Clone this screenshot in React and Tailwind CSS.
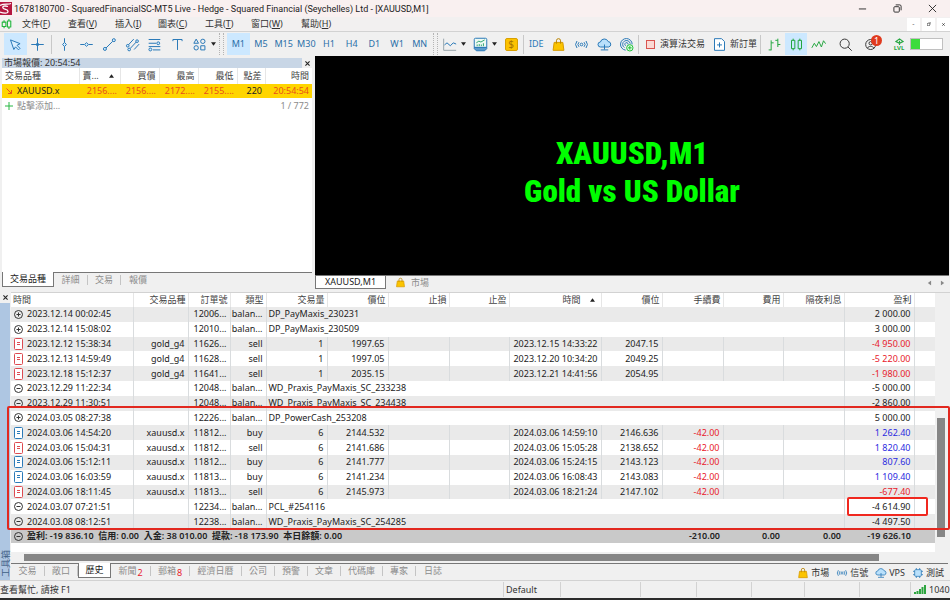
import React, { useState } from 'react'

const drawTools = ['cursor', 'cross']
const lineTools = ['vline', 'hline', 'trend', 'channel', 'fibo', 'text', 'shapes']
const timeframes = ['M1', 'M5', 'M15', 'M30', 'H1', 'H4', 'D1', 'W1', 'MN']
const menus = [
    ['文件', 'F', 'w-[46px]'],
    ['查看', 'V', 'w-[47px]'],
    ['插入', 'I', 'w-[43px]'],
    ['圖表', 'C', 'w-[47px]'],
    ['工具', 'T', 'w-[46px]'],
    ['窗口', 'W', 'w-[50px]'],
    ['幫助', 'H', 'w-[46px]'],
]

// b = balance operation, t = closed trade
const history = [
    { k: 'b', icon: 'plus', time: '2023.12.14 00:02:45', order: '12006...', note: 'DP_PayMaxis_230231', profit: '2 000.00' },
    { k: 'b', icon: 'plus', time: '2023.12.14 15:08:02', order: '12010...', note: 'DP_PayMaxis_230509', profit: '3 000.00' },
    { k: 't', type: 'sell', time: '2023.12.12 15:38:34', symbol: 'gold_g4', order: '11626...', vol: '1', open: '1997.65', closed: '2023.12.15 14:33:22', close: '2047.15', fee: '', profit: '-4 950.00', tone: 'red' },
    { k: 't', type: 'sell', time: '2023.12.13 14:59:49', symbol: 'gold_g4', order: '11628...', vol: '1', open: '1997.05', closed: '2023.12.20 10:34:20', close: '2049.25', fee: '', profit: '-5 220.00', tone: 'red' },
    { k: 't', type: 'sell', time: '2023.12.18 15:12:37', symbol: 'gold_g4', order: '11641...', vol: '1', open: '2035.15', closed: '2023.12.21 14:41:56', close: '2054.95', fee: '', profit: '-1 980.00', tone: 'red' },
    { k: 'b', icon: 'minus', time: '2023.12.29 11:22:34', order: '12048...', note: 'WD_Praxis_PayMaxis_SC_233238', profit: '-5 000.00' },
    { k: 'b', icon: 'minus', time: '2023.12.29 11:30:51', order: '12048...', note: 'WD_Praxis_PayMaxis_SC_234438', profit: '-2 860.00' },
    { k: 'b', icon: 'plus', time: '2024.03.05 08:27:38', order: '12226...', note: 'DP_PowerCash_253208', profit: '5 000.00' },
    { k: 't', type: 'buy', time: '2024.03.06 14:54:20', symbol: 'xauusd.x', order: '11812...', vol: '6', open: '2144.532', closed: '2024.03.06 14:59:10', close: '2146.636', fee: '-42.00', profit: '1 262.40', tone: 'blue' },
    { k: 't', type: 'sell', time: '2024.03.06 15:04:31', symbol: 'xauusd.x', order: '11812...', vol: '6', open: '2141.686', closed: '2024.03.06 15:05:28', close: '2138.652', fee: '-42.00', profit: '1 820.40', tone: 'blue' },
    { k: 't', type: 'buy', time: '2024.03.06 15:12:11', symbol: 'xauusd.x', order: '11812...', vol: '6', open: '2141.777', closed: '2024.03.06 15:24:15', close: '2143.123', fee: '-42.00', profit: '807.60', tone: 'blue' },
    { k: 't', type: 'buy', time: '2024.03.06 16:03:59', symbol: 'xauusd.x', order: '11813...', vol: '6', open: '2141.234', closed: '2024.03.06 16:08:43', close: '2143.083', fee: '-42.00', profit: '1 109.40', tone: 'blue' },
    { k: 't', type: 'sell', time: '2024.03.06 18:11:45', symbol: 'xauusd.x', order: '11813...', vol: '6', open: '2145.973', closed: '2024.03.06 18:21:24', close: '2147.102', fee: '-42.00', profit: '-677.40', tone: 'red' },
    { k: 'b', icon: 'minus', time: '2024.03.07 07:21:51', order: '12234...', note: 'PCL_#254116', profit: '-4 614.90' },
    { k: 'b', icon: 'minus', time: '2024.03.08 08:12:51', order: '12238...', note: 'WD_Praxis_PayMaxis_SC_254285', profit: '-4 497.50' },
]

const tones = { red: 'text-[#e8202c]', blue: 'text-[#2a2ae0]' }

const glyphs = {
    cursor: <path d="M3 3.5 7 15l2-3.2 3.6 3.6 1.8-1.8-3.6-3.6L14.5 8Z" fill="#d9efff" />,
    cross: <path d="M9 1.500v15M1.500 9h15M7.500 9a1.500 1.500 0 1 0 3 0 1.500 1.500 0 0 0-3 0" />,
    vline: <><path d="M9 1.500v5M9 11.500v5" /><path d="M9 6.500 11.3 9 9 11.500 6.7 9Z" fill="#d9efff" /></>,
    hline: <><path d="M1.500 9h5M11.500 9h5" /><path d="M9 6.800 11.300 9 9 11.200 6.700 9Z" fill="#d9efff" /></>,
    trend: <><path d="m4.500 13.500 8.500-8.500" /><circle cx="3.500" cy="14.300" r="1.800" fill="#d9efff" /><circle cx="14.200" cy="3.800" r="1.800" fill="#d9efff" /></>,
    channel: <><path d="m4 9.500 6.500-7M6 14l7.500-8M11 15l6-6.500" /><circle cx="3.300" cy="10.500" r="1.600" fill="#d9efff" /><circle cx="5" cy="15" r="1.600" fill="#d9efff" /><circle cx="14.500" cy="5" r="1.600" fill="#d9efff" /></>,
    fibo: <><path d="M2 3h14M2 7.500h9M2 11.500h14M7 15.500h9" /><circle cx="13.500" cy="7.500" r="1.700" fill="#d9efff" /><circle cx="4" cy="15" r="1.700" fill="#d9efff" /></>,
    text: <path d="M3.500 5V3h11v2M9 3v12.500" />,
    shapes: <><path d="M5 2.500 7.800 7.500H2.200Z" /><circle cx="13" cy="5.200" r="2.600" /><circle cx="5" cy="13" r="2.600" /><rect x="10.500" y="10.500" width="5" height="5" /></>,
    signal: <><circle cx="9" cy="9" r="1.600" /><path d="M6 6.200a4 4 0 0 0 0 5.600M12 6.200a4 4 0 0 1 0 5.600M3.600 4.800a6.600 6.600 0 0 0 0 8.400M14.400 4.800a6.600 6.600 0 0 1 0 8.400" /></>,
    cloud: <><path d="M4.300 12a3 3 0 0 1-.2-6 4.900 4.900 0 0 1 9.300-.5 3.300 3.300 0 0 1 .6 6.500Z" fill="#b9e0fb" /><path d="M9 9v6M4.500 15.500h9" /></>,
    vps: <><path d="M8 15.800a7 7 0 1 1 7.800-7M6.500 12.700A4.600 4.600 0 1 1 13.500 8M8 10.500A2 2 0 1 1 11 9" /><circle cx="13" cy="13" r="3.800" fill="#e6ffe6" stroke="#1fbf3a" /><path d="M13 10.800v4.400M10.800 13h4.400" stroke="#1fbf3a" /></>,
    chip: <><rect x="4" y="4" width="10" height="10" rx="1.500" fill="#b9e0fb" /><path d="M6.500 1.500V4M11.500 1.500V4M6.500 14v2.500M11.500 14v2.500M1.500 6.500H4M1.500 11.500H4M14 6.500h2.500M14 11.500h2.500" /></>,
    bag: <><path d="M3.800 6.500h10.400l1.300 9.500h-13Z" fill="#fbc400" stroke="#d79b00" /><path d="M6.500 8V4.500a2.500 2.500 0 0 1 5 0V8" stroke="#b98200" /></>,
    line: <><path d="M2 2v14H17" stroke="#9aa6ad" /><path d="m3 9.500 3-2.500 4 3.500 3.500-3.500 3.500 1.500" /></>,
    monitor: <><path d="M1.500 12.500V3A1.500 1.500 0 0 1 3 1.500h12A1.500 1.500 0 0 1 16.500 3v9.500Z" fill="#eefaf4" /><path d="M1.500 12.500h15v1.500L14 16.500H4L1.500 14Z" fill="#5b9ccc" /><path d="m4 7 3-2 2.500 1L14 3.500M5 11V9M7.500 11V8.500M10 11V9M12.500 11V7.500" stroke="#33a873" /></>,
    neworder: <><path d="M3 2h8.500L15 5.500V16H3Z" fill="#fff" /><path d="M9 6.500v6M6 9.500h6" /></>,
    bars: <path d="M5 4v12M2 15.500h3M5 7h3M13 2v10M10 4h3M13 9h3" stroke="#27a742" />,
    candles: <g stroke="#22a63d"><path d="M5 2v2M5 14v2M13 2v2M13 14v2" /><rect x="3" y="4" width="4" height="10" /><rect x="11" y="4" width="4" height="10" /></g>,
    zigzag: <path d="m1 13 3-5.500 2.500 4L9.500 5.500l3 6.500L15 4.500 17.500 8" stroke="#27a742" />,
    search: <g stroke="#3a3a3a"><circle cx="8" cy="8" r="5.500" /><path d="m12 12 4.500 4.500" /></g>,
    user: <g stroke="#3a3a3a"><circle cx="8" cy="9" r="6" /><circle cx="8" cy="7.500" r="2" /><path d="M4 13.500c1.500-3 6.500-3 8 0" /></g>,
    mt: <g stroke="#22b63d" strokeWidth="1.800"><path d="M5 3v3M5 13v3M13 1v3M13 14v3" /><rect x="2" y="6" width="6" height="7" /><rect x="10.500" y="4" width="5.500" height="10" /></g>,
}

function Glyph({ name, className = 'size-[15px]' }) {
    return (
        <svg viewBox="0 0 18 18" className={`shrink-0 ${className}`} fill="none" stroke="#2b7ab8" strokeWidth="1.2" strokeLinejoin="round" aria-hidden="true">
            {glyphs[name]}
        </svg>
    )
}

function Sep() {
    return <div className="w-px h-[19px] bg-[#c8c8c8] shrink-0" />
}

function Grip() {
    return <div className="w-[5px] h-[22px] border-x border-dotted border-[#b4b4b4] shrink-0" />
}

function ToolButton({ name, active, className = 'flex-1' }) {
    return (
        <button aria-label={name} className={`h-[22px] flex items-center justify-center ${active ? 'bg-[#cce8ff]' : ''} ${className}`}>
            <Glyph name={name} />
        </button>
    )
}

function Caret({ className }) {
    return (
        <svg viewBox="0 0 6 4" className={`w-[5px] h-1 shrink-0 ${className}`} aria-hidden="true">
            <path d="M0 0h6L3 4Z" fill="#222" />
        </svg>
    )
}

function Cross({ className = 'size-[5px]' }) {
    return (
        <svg viewBox="0 0 6 6" className={className} fill="none" stroke="#222" strokeWidth="1.300" aria-hidden="true">
            <path d="m.500.500 5 5M5.500.500l-5 5" />
        </svg>
    )
}

function TitleBar() {
    return (
        <header className="h-[17px] flex items-center bg-[#f9f0f0] shrink-0">
            <svg viewBox="0 0 12 13" className="w-3 h-[13px] shrink-0" aria-hidden="true">
                <rect width="12" height="13" fill="#b5173f" />
                <path d="M0 3.500C4 1 8 3 11 1.500M8 4.500C5 3.500 2 4 3 6s5 1 5 3.500S3 11 0 10" fill="none" stroke="#fff" strokeWidth="1.300" />
            </svg>
            <h1 className="ml-[2px] leading-4 flex-1 text-[#222] font-['Roboto','Noto_Sans',sans-serif]">1678180700 - SquaredFinancialSC-MT5 Live - Hedge - Squared Financial (Seychelles) Ltd - [XAUUSD,M1]</h1>
            <div className="flex">
                <button aria-label="Minimize" className="w-[35px] h-4 flex items-center justify-center">
                    <svg viewBox="0 0 10 10" className="size-[9px]" stroke="#222" fill="none"><path d="M1 5.500h8" /></svg>
                </button>
                <button aria-label="Restore" className="w-[35px] h-4 flex items-center justify-center">
                    <svg viewBox="0 0 10 10" className="size-[9px]" stroke="#222" fill="none"><rect x="1" y="3" width="6" height="6" rx="1" /><path d="M3 1h4.500A1.500 1.500 0 0 1 9 2.500V7" /></svg>
                </button>
                <button aria-label="Close" className="w-[35px] h-4 flex items-center justify-center">
                    <svg viewBox="0 0 10 10" className="size-[9px]" stroke="#222" fill="none"><path d="m1 1 8 8M9 1 1 9" /></svg>
                </button>
            </div>
        </header>
    )
}

function MenuBar() {
    return (
        <nav className="h-[14px] flex items-center bg-[#f2f0f0] shrink-0">
            <Glyph name="mt" className="w-[11px] h-3 ml-px mr-[10px]" />
            {menus.map(([label, key, width]) => (
                <button key={key} className={`${width} text-left leading-[14px]`}>{label}(<u>{key}</u>)</button>
            ))}
            <div className="ml-auto flex gap-[2px] text-[7px] text-[#666]">
                <button aria-label="Minimize chart" className="w-[13px] h-[13px] bg-white leading-3">-</button>
                <button aria-label="Restore chart" className="w-[13px] h-[13px] bg-white flex items-center justify-center">
                    <svg viewBox="0 0 6 6" className="size-1" stroke="#777" fill="none"><rect x="0.500" y="2" width="3.500" height="3.500" /><path d="M2 .500h3.500V4" /></svg>
                </button>
                <button aria-label="Close chart" className="w-[13px] h-[13px] bg-white flex items-center justify-center">
                    <Cross className="size-[3px]" />
                </button>
            </div>
        </nav>
    )
}

function Toolbar() {
    const [frame, setFrame] = useState('M1')
    return (
        <div className="h-[25px] flex items-center border-t border-[#d2d2d2] shrink-0 pl-1 whitespace-nowrap">
            <div className="flex w-[45px] shrink-0">
                {drawTools.map(t => <ToolButton key={t} name={t} active={t === 'cursor'} />)}
            </div>
            <div className="flex w-1 shrink-0 justify-center"><Sep /></div>
            <div className="flex w-[158px] shrink-0">
                {lineTools.map(t => <ToolButton key={t} name={t} />)}
            </div>
            <Caret className="mr-[3px]" />
            <Grip />
            <div className="flex w-[204px] shrink-0 ml-[3px]">
                {timeframes.map(t => (
                    <button
                        key={t}
                        onClick={() => setFrame(t)}
                        className={`flex-1 basis-0 min-w-0 h-[22px] text-[#2a6fa8] text-center ${frame === t ? 'bg-[#cce8ff]' : ''}`}
                    >
                        {t}
                    </button>
                ))}
            </div>
            <div className="ml-[2px]"><Grip /></div>
            <ToolButton name="line" className="w-[23px]" />
            <Caret className="mr-[3px]" />
            <ToolButton name="monitor" className="w-[23px]" />
            <Caret className="mr-[4px]" />
            <button aria-label="dollar" className="w-[20px] h-[22px] flex items-center justify-center">
                <span className="w-[13px] h-[13px] rounded-xs bg-[#fcc200] border border-[#d9a000] text-[#a87400] text-[10px] leading-[11px] text-center">$</span>
            </button>
            <div className="flex w-[4px] justify-center"><Sep /></div>
            <div className="flex w-[113px] shrink-0 items-center">
                <button className="flex-1 basis-0 text-[9px] text-[#2b7ab8]">IDE</button>
                {['bag', 'signal', 'cloud', 'vps'].map(t => <ToolButton key={t} name={t} />)}
            </div>
            <Sep />
            <button className="flex items-center gap-[5px] ml-[7px] h-[22px] shrink-0">
                <span className="size-[9px] border border-[#d9544f] bg-[#fbd9d4]" />
                演算法交易
            </button>
            <button className="flex items-center gap-[3px] ml-[7px] h-[22px] shrink-0">
                <Glyph name="neworder" />
                新訂單
            </button>
            <div className="flex w-[6px] justify-center"><Sep /></div>
            <div className="flex w-[66px] shrink-0">
                <ToolButton name="bars" />
                <ToolButton name="candles" active />
                <ToolButton name="zigzag" />
            </div>
            <ToolButton name="search" className="w-[24px] ml-[4px]" />
            <div className="relative">
                <ToolButton name="user" className="w-[28px]" />
                <span className="absolute left-[14px] top-[2px] size-[11px] rounded-full bg-[#e03a1e] text-white text-[9px] leading-[11px] text-center">1</span>
            </div>
            <div className="ml-[4px] flex flex-col items-center w-[20px]">
                <svg viewBox="0 0 10 8" className="w-[9px] h-[7px]" fill="none" stroke="#27a742" strokeWidth="1.300"><path d="M1 4 5 1l4 3-4 2ZM5 3v5" /></svg>
                <span className="text-[6px] leading-[6px] font-bold text-[#27a742]">LVL</span>
            </div>
            <div className="ml-px mr-auto w-[33px] h-[12px] border border-[#c0c0c0] bg-white">
                <div className="w-[9px] h-full bg-[#3ddc3d]" />
            </div>
        </div>
    )
}

function TabStrip({ tabs, active, onPick }) {
    return (
        <div role="tablist" className="flex text-[#8c8c8c]">
            {tabs.map(([label, width, count], i) => (
                <button
                    key={label}
                    role="tab"
                    aria-selected={active === label}
                    onClick={() => onPick(label)}
                    className={active === label
                        ? `${width} h-[15px] -mt-px bg-white text-[#222] border border-t-0 border-[#777] leading-3`
                        : `${width} h-[14px] flex items-center`}
                >
                    {active === label ? label : (
                        <span className={`w-full h-[10px] flex items-center justify-center leading-[10px] border-[#c4c4c4] ${i < tabs.length - 1 ? 'border-r' : ''}`}>
                            {label}
                            {count && <span className="text-[#e8202c] ml-px pt-[3px]">{count}</span>}
                        </span>
                    )}
                </button>
            ))}
        </div>
    )
}

function MarketWatch() {
    const [tab, setTab] = useState('交易品種')
    return (
        <section className="w-[315px] shrink-0 flex flex-col pl-[2px] pr-[3px] pt-[2px]">
            <div className="h-[10px] flex items-center justify-between bg-[#c8d6e6] pl-[2px] shrink-0">
                <h2 className="leading-[10px]">市場報價: 20:54:54</h2>
                <button aria-label="Close market watch" className="w-[10px] h-[10px] bg-[#f0f0f0] flex items-center justify-center"><Cross /></button>
            </div>
            <div className="flex-1 bg-white">
                <table className="w-full table-fixed border-collapse whitespace-nowrap text-right">
                    <colgroup>
                        <col className="w-[77px]" />
                        <col className="w-[41px]" />
                        <col className="w-[39px]" />
                        <col className="w-[39px]" />
                        <col className="w-[39px]" />
                        <col className="w-[28px]" />
                        <col />
                    </colgroup>
                    <thead>
                        <tr className="h-[16px] text-[#444]">
                            <th className="font-normal text-left pl-[3px] border-r border-[#e6e6e6]">交易品種</th>
                            <th className="font-normal pl-[3px] border-r border-[#e6e6e6]">
                                <div className="flex items-center justify-between pr-[6px]">賣...<Caret className="rotate-180" /></div>
                            </th>
                            <th className="font-normal pr-[3px] border-r border-[#e6e6e6]">買價</th>
                            <th className="font-normal pr-[3px] border-r border-[#e6e6e6]">最高</th>
                            <th className="font-normal pr-[3px] border-r border-[#e6e6e6]">最低</th>
                            <th className="font-normal pr-[3px] border-r border-[#e6e6e6]">點差</th>
                            <th className="font-normal pr-[3px]">時間</th>
                        </tr>
                    </thead>
                    <tbody>
                        <tr className="h-[14px] bg-[#ffd500] text-[#e8501c]">
                            <td className="text-left text-[#222]">
                                <div className="flex items-center gap-[5px] pl-[4px]">
                                    <svg viewBox="0 0 6 6" className="size-[6px]" fill="none" stroke="#e8501c"><path d="m.500.500 5 5M5.500 2v3.500H2" /></svg>
                                    XAUUSD.x
                                </div>
                            </td>
                            <td className="pr-[3px]">2156....</td>
                            <td className="pr-[3px]">2156....</td>
                            <td className="pr-[3px]">2172....</td>
                            <td className="pr-[3px]">2155....</td>
                            <td className="pr-[3px] text-[#222]">220</td>
                            <td className="pr-[3px]">20:54:54</td>
                        </tr>
                        <tr className="h-[15px] text-[#8c8c8c]">
                            <td className="text-left" colSpan={6}>
                                <button className="flex items-center gap-[4px] pl-[3px]">
                                    <svg viewBox="0 0 8 8" className="size-2" stroke="#27b742"><path d="M4 0v8M0 4h8" /></svg>
                                    點擊添加...
                                </button>
                            </td>
                            <td className="pr-[3px]">1 / 772</td>
                        </tr>
                    </tbody>
                </table>
            </div>
            <div className="h-[17px] border-t border-[#777] shrink-0">
                <TabStrip
                    tabs={[['交易品種', 'w-[52px]'], ['詳細', 'w-[34px]'], ['交易', 'w-[33px]'], ['報價', 'w-[34px]']]}
                    active={tab}
                    onPick={setTab}
                />
            </div>
        </section>
    )
}

function Chart() {
    return (
        <section className="flex-1 min-w-0 flex flex-col pr-px">
            <div className="flex-1 bg-black flex flex-col items-center justify-center pt-[14px] text-[#00ff00] font-black text-[31px] leading-[38px] text-center font-[Impact,'Roboto_Condensed','DejaVu_Sans_Condensed',sans-serif]">
                <p>XAUUSD,M1</p>
                <p>Gold vs US Dollar</p>
            </div>
            <div className="h-[14px] flex items-center border-t border-[#777] shrink-0">
                <button className="w-[71px] h-[13px] bg-white border border-t-0 border-[#777] leading-3 text-[#222]">XAUUSD,M1</button>
                <button className="flex items-center gap-[5px] ml-[9px] text-[#8c8c8c] leading-3"><Glyph name="bag" className="size-[11px]" />市場</button>
                <div className="ml-auto flex gap-[8px] pr-[4px]">
                    <button aria-label="Scroll left"><Caret className="rotate-90 opacity-50" /></button>
                    <button aria-label="Scroll right"><Caret className="-rotate-90 opacity-50" /></button>
                </div>
            </div>
        </section>
    )
}

function RowIcon({ row }) {
    if (row.k === 't') {
        const c = row.type === 'sell' ? '#dd4a50' : '#2b7ab8'
        return (
            <svg viewBox="0 0 9 12" className="w-[9px] h-3 shrink-0" fill="#fff" stroke={c}>
                <rect x="0.500" y="0.500" width="8" height="11" rx="1" />
                <path d="M3 4.500h3M3 6.500h3" />
            </svg>
        )
    }
    return (
        <svg viewBox="0 0 9 9" className="size-[9px] shrink-0" fill="none" stroke="#333">
            <circle cx="4.500" cy="4.500" r="4" />
            <path d={row.icon === 'plus' ? 'M2.500 4.500h4M4.500 2.500v4' : 'M2.500 4.500h4'} />
        </svg>
    )
}

const cell = 'pr-[3px] border-r border-[#d9dcde]'

function HistoryTable() {
    return (
        <table className="w-full h-[250px] table-fixed border-collapse whitespace-nowrap text-right leading-3 bg-white">
            <colgroup>
                <col className="w-[122px]" />
                <col className="w-[55px]" />
                <col className="w-[42px]" />
                <col className="w-[36px]" />
                <col className="w-[61px]" />
                <col className="w-[61px]" />
                <col className="w-[61px]" />
                <col className="w-[60px]" />
                <col className="w-[92px]" />
                <col className="w-[61px]" />
                <col className="w-[61px]" />
                <col className="w-[60px]" />
                <col className="w-[61px]" />
                <col className="w-[70px]" />
                <col />
            </colgroup>
            <thead>
                <tr className="h-[14px] text-[#444]">
                    <th className="font-normal text-left pl-[2px] border-r border-[#e6e6e6]">時間</th>
                    {['交易品種', '訂單號', '類型', '交易量', '價位', '止損', '止盈'].map(h => (
                        <th key={h} className="font-normal pr-[2px] border-r border-[#e6e6e6]">{h}</th>
                    ))}
                    <th className="font-normal border-r border-[#e6e6e6]">
                        <div className="flex items-center justify-end gap-[9px] pr-[6px]">時間<Caret className="rotate-180" /></div>
                    </th>
                    {['價位', '手續費', '費用', '隔夜利息', '盈利'].map(h => (
                        <th key={h} className="font-normal pr-[2px] border-r border-[#e6e6e6]">{h}</th>
                    ))}
                    <th />
                </tr>
            </thead>
            <tbody className="text-[#222]">
                {history.map((row, i) => (
                    <tr key={row.time} className={`h-[14px] ${i % 2 === 0 ? 'bg-[#eaeaea]' : 'bg-white'}`}>
                        <td className="text-left border-r border-[#d9dcde]">
                            <div className="flex items-center gap-[4px] pl-[3px]"><RowIcon row={row} />{row.time}</div>
                        </td>
                        <td className={cell}>{row.symbol}</td>
                        <td className={cell}>{row.order}</td>
                        <td className={cell}>{row.k === 'b' ? 'balan...' : row.type}</td>
                        {row.k === 'b' ? (
                            <td colSpan={9} className="text-left pl-[2px] border-r border-[#d9dcde]">{row.note}</td>
                        ) : (
                            <>
                                <td className={cell}>{row.vol}</td>
                                <td className={cell}>{row.open}</td>
                                <td className={cell} />
                                <td className={cell} />
                                <td className={cell}>{row.closed}</td>
                                <td className={cell}>{row.close}</td>
                                <td className={`${cell} text-[#e8202c]`}>{row.fee}</td>
                                <td className={cell} />
                                <td className={cell} />
                            </>
                        )}
                        <td className={`${cell} ${tones[row.tone] || ''}`}>{row.profit}</td>
                        <td />
                    </tr>
                ))}
            </tbody>
            <tfoot>
                <tr className="h-[14px] bg-[#c9c9c9] text-[#222] font-semibold">
                    <td colSpan={10} className="text-left">
                        <div className="flex items-center gap-[4px] pl-[3px] whitespace-pre">
                            <RowIcon row={{ k: 'b', icon: 'minus' }} />
                            {'盈利: -19 836.10  信用: 0.00  入金: 38 010.00  提款: -18 173.90  本日餘額: 0.00'}
                        </div>
                    </td>
                    <td className="pr-[3px]">-210.00</td>
                    <td className="pr-[3px]">0.00</td>
                    <td className="pr-[3px]">0.00</td>
                    <td className="pr-[3px]">-19 626.10</td>
                    <td />
                </tr>
            </tfoot>
        </table>
    )
}

function Toolbox() {
    const [tab, setTab] = useState('歷史')
    const links = [['bag', '市場'], ['signal', '信號'], ['cloud', 'VPS'], ['chip', '測試']]
    return (
        <section className="flex shrink-0 mt-[3px]">
            <div className="w-[11px] shrink-0 flex flex-col pr-px">
                <button aria-label="Close toolbox" className="h-[11px] flex items-center justify-center"><Cross /></button>
                <div className="flex-1 bg-[#aec6e2] flex flex-col justify-end items-start pb-[3px]">
                    <span className="[writing-mode:vertical-rl] [text-orientation:sideways] rotate-180 leading-3 text-[#3f5f85]">工具箱</span>
                </div>
            </div>
            <div className="flex-1 min-w-0">
                <div className="relative flex border-t border-[#d2d2d2]">
                    <div className="flex-1 min-w-0 bg-white pb-[9px]">
                        <HistoryTable />
                    </div>
                    <div className="w-[15px] shrink-0 pl-[2px] pt-[125px]">
                        <div className="w-[8px] h-[119px] bg-[#868686]" />
                    </div>
                    {/* red markers drawn over the rows */}
                    <div className="absolute left-[-4px] right-0 top-[113px] h-[124px] rounded-xs border-2 border-[#e2281f]" />
                    <div className="absolute right-[22px] top-[204px] w-[81px] h-[19px] rounded-xs border-2 border-[#f0281f]" />
                </div>
                <div className="h-[11px] pt-[2px] pl-[13px] pr-[71px]">
                    <div className="h-[7px] bg-[#868686]" />
                </div>
                <div className="h-[17px] mr-[2px] flex justify-between border-t border-[#777]">
                    <TabStrip
                        tabs={[['交易', 'w-[34px]'], ['敞口', 'w-[33px]'], ['歷史', 'w-[33px]'], ['新聞', 'w-[40px]', '2'], ['郵箱', 'w-[39px]', '8'], ['經濟日曆', 'w-[52px]'], ['公司', 'w-[33px]'], ['預警', 'w-[33px]'], ['文章', 'w-[33px]'], ['代碼庫', 'w-[42px]'], ['專家', 'w-[33px]'], ['日誌', 'w-[34px]']]}
                        active={tab}
                        onPick={setTab}
                    />
                    <div className="flex items-center gap-[7px] pr-[4px] pt-[1px]">
                        {links.map(([icon, label]) => (
                            <button key={label} className="flex items-center gap-[2px] leading-3"><Glyph name={icon} className="size-3" />{label}</button>
                        ))}
                    </div>
                </div>
            </div>
        </section>
    )
}

function StatusBar() {
    return (
        <footer className="h-[20px] shrink-0 flex items-stretch border-t border-t-[#d2d2d2] border-b-2 border-b-[#2b2b2b] leading-[18px]">
            <p className="flex-1">查看幫忙, 請按 F1</p>
            <p className="w-[57px] border-l border-[#d2d2d2] pl-[2px] my-px leading-4">Default</p>
            <div className="w-[80px] border-l border-[#d2d2d2] my-px" />
            <div className="w-[56px] border-l border-[#d2d2d2] my-px" />
            <div className="w-[55px] border-l border-[#d2d2d2] my-px" />
            <div className="w-[53px] border-l border-[#d2d2d2] my-px" />
            <div className="w-[55px] border-l border-[#d2d2d2] my-px" />
            <div className="w-[51px] border-l border-[#d2d2d2] my-px" />
            <p className="w-[40px] border-l border-[#d2d2d2] my-px pl-[3px] flex items-center gap-[3px] overflow-hidden">
                <svg viewBox="0 0 12 9" className="w-3 h-[9px] shrink-0" fill="#2da53f"><path d="M0 7h2v2H0ZM2.500 6h2v3h-2ZM5 4h2v5H5ZM7.500 2h2v7h-2ZM10 0h2v9h-2Z" /></svg>
                1040
            </p>
        </footer>
    )
}

export default function App() {
    return (
        <div className="h-screen flex flex-col overflow-hidden bg-[#f0f0f0] text-[9px] leading-3 text-[#333] font-['Noto_Sans','Noto_Sans_CJK_TC',sans-serif]">
            <TitleBar />
            <MenuBar />
            <Toolbar />
            <main className="flex-1 min-h-0 flex flex-col">
                <div className="flex-1 min-h-0 flex">
                    <MarketWatch />
                    <Chart />
                </div>
                <Toolbox />
            </main>
            <StatusBar />
        </div>
    )
}
